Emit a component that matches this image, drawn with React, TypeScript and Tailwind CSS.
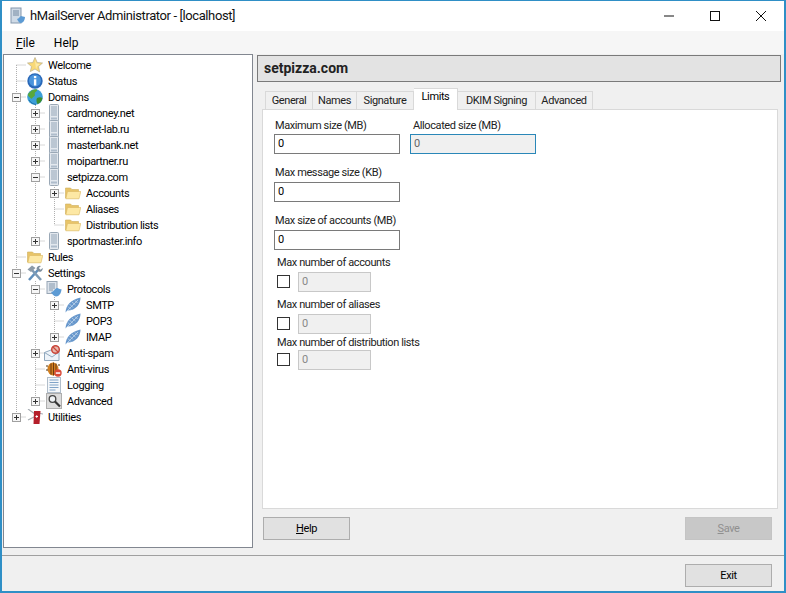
import React from 'react';

const FONT = "font-['Roboto','Liberation_Sans',sans-serif]";
const TEXT = 'text-[11px] tracking-[-0.4px]';
const LABEL = 'h-4 leading-[18px] whitespace-nowrap text-[#222]';

const Star = () => (
  <svg width="16" height="16" viewBox="0 0 16 16">
    <path d="M8 .5l2.200 5 5.300.5-4 3.600 1.200 5.400L8 12l-4.700 2.600L4.500 9.600l-4-3.600 5.300-.5z" fill="#f8d977" stroke="#b9ad8c" strokeWidth=".7" />
    <path d="M8 3l1.500 3.500L13 7l-3 2.500-1 3L8 3z" fill="#fbe9a8" />
  </svg>
);

const Info = () => (
  <svg width="16" height="16" viewBox="0 0 16 16">
    <circle cx="8" cy="8" r="7.700" fill="#2a68b8" />
    <circle cx="8" cy="7.500" r="6" fill="#4a94dc" />
    <rect x="6.900" y="3" width="2.400" height="2.200" fill="#fff" />
    <rect x="6.900" y="6.300" width="2.400" height="6.200" fill="#fff" />
  </svg>
);

const Globe = () => (
  <svg width="16" height="16" viewBox="0 0 16 16">
    <circle cx="8" cy="8" r="7.800" fill="#3c9fd8" />
    <path d="M3 3c2-2 5-3 7-2.500 1 1-1 2-2 3s1 3-1 4-2 3-3 2-2.500-2-3-3 .5-2.500 2-3.500z" fill="#5aa83c" />
    <path d="M10 9c2-1 4-1 5.500 0-.5 3-2.500 5.500-5 6-1-1.500-1.500-4-.5-6z" fill="#3f8f2e" />
    <path d="M2 11c2 3 4 4 7 4.500" stroke="#1f6fa8" fill="none" />
  </svg>
);

const Server = () => (
  <svg width="16" height="18" viewBox="0 0 16 18" className="-my-px">
    <rect x="3.500" y=".5" width="9" height="17" rx="1" fill="#e3e8ee" stroke="#9aa8b6" />
    <path d="M5 3h6M5 5h6M5 7h6M5 9h6M5 11h6" stroke="#93a5b7" />
    <rect x="5" y="13.500" width="6" height="2" fill="#aebccb" />
  </svg>
);

const Folder = () => (
  <svg width="16" height="16" viewBox="0 0 16 16">
    <path d="M.5 3h5l1.500 1.500h6.500V13H.5z" fill="#e8c468" stroke="#cfae5c" strokeWidth=".6" />
    <path d="M2.500 6.500H15.800L14 13.800H.8z" fill="#fde8a4" stroke="#dcb862" strokeWidth=".6" />
  </svg>
);

const Tools = () => (
  <svg width="16" height="16" viewBox="0 0 16 16">
    <path d="M2 15L11 5" stroke="#5f8fbc" strokeWidth="2.600" />
    <path d="M14 15L5 5" stroke="#7e9ab4" strokeWidth="2.600" />
    <path d="M.5 4.500L5 .5 8.500 3l-4.500 4z" fill="#8d9ba8" />
    <path d="M9.500 4a3.300 3.300 0 0 1 4.500-3l-2.200 2 1.700 1.700 2.200-1.800a3.300 3.300 0 0 1-4 3.800z" fill="#7f8f9e" />
  </svg>
);

const Protocols = () => (
  <svg width="16" height="16" viewBox="0 0 16 16">
    <rect x="1" y=".5" width="10" height="12" fill="#dde4ec" stroke="#98a6b5" />
    <path d="M3 3h6M3 5h6M3 7h6M3 9h4" stroke="#8296ab" />
    <path d="M5 11c3 0 4-4 6-4s3 2 4.500 1c0 4-2.500 7.500-5.500 7.500-2 0-4-2.500-5-4.500z" fill="#5d9bd4" />
  </svg>
);

const Feather = () => (
  <svg width="16" height="16" viewBox="0 0 16 16">
    <path d="M.5 15.500C1 8 6 2.500 15.500.5 15.500 7 11 13.500 2.500 13.500z" fill="#6797cc" />
    <path d="M1 15L13 3M4.500 7l3.500 3.500M7 5l3.500 3M3 9.500l3 3M10 3.500l2.500 2.500" stroke="#cfe0f0" strokeWidth=".7" />
  </svg>
);

const AntiSpam = () => (
  <svg width="18" height="16" viewBox="0 0 18 16" className="-ml-[2px]">
    <path d="M.5 7.500L7 5h8v10.500H.5z" fill="#edf3f9" stroke="#90a8be" />
    <path d="M.5 7.500L8 12 15 7" fill="none" stroke="#90a8be" />
    <circle cx="11.500" cy="4.500" r="3.800" fill="#e8b8ac" stroke="#c9473b" strokeWidth="1.500" />
    <path d="M9 2l5 5" stroke="#c9473b" strokeWidth="1.300" />
  </svg>
);

const AntiVirus = () => (
  <svg width="16" height="16" viewBox="0 0 16 16">
    <ellipse cx="7" cy="8" rx="5.500" ry="6.500" fill="#d27f1f" />
    <path d="M5 2.500v11M7.500 1.500v13M10 2.500v11" stroke="#6b3a10" />
    <path d="M0 5h2M0 9h2M12 4h2" stroke="#4d3010" />
    <circle cx="12" cy="12" r="3.700" fill="#d94a38" />
    <rect x="9.800" y="11.300" width="4.400" height="1.500" fill="#fff" />
  </svg>
);

const Logging = () => (
  <svg width="16" height="16" viewBox="0 0 16 16">
    <rect x="1.500" y=".5" width="13" height="15" fill="#f4f7fa" stroke="#b0bdca" />
    <path d="M3.500 3h9M3.500 5.500h9M3.500 8h9M3.500 10.500h9M3.500 13h6" stroke="#7fa3c8" />
  </svg>
);

const Advanced = () => (
  <svg width="16" height="16" viewBox="0 0 16 16">
    <rect x=".5" y=".5" width="15" height="15" fill="#dcdcdc" stroke="#aeaeae" />
    <circle cx="6.500" cy="6" r="3.300" fill="#eef2f5" stroke="#444" strokeWidth="1.300" />
    <path d="M9 8.500l5 5" stroke="#333" strokeWidth="2.200" />
  </svg>
);

const Knife = () => (
  <svg width="16" height="16" viewBox="0 0 16 16">
    <path d="M1 0l7 5M1 11l6-3M11 4l5 1" stroke="#a7aeb4" strokeWidth="1.200" fill="none" />
    <path d="M7 2h6.500L12.500 15H6.500z" fill="#b51f2b" />
    <path d="M8.500 7.500h2.500M9.700 6.300v2.500" stroke="#fff" />
  </svg>
);

type Node = {
  label: string;
  icon: React.ReactNode;
  guides: boolean[];
  exp?: '+' | '-';
  last?: boolean;
  first?: boolean;
};

const nodes: Node[] = [
  { label: 'Welcome', icon: <Star />, guides: [], first: true },
  { label: 'Status', icon: <Info />, guides: [] },
  { label: 'Domains', icon: <Globe />, guides: [], exp: '-' },
  { label: 'cardmoney.net', icon: <Server />, guides: [true], exp: '+' },
  { label: 'internet-lab.ru', icon: <Server />, guides: [true], exp: '+' },
  { label: 'masterbank.net', icon: <Server />, guides: [true], exp: '+' },
  { label: 'moipartner.ru', icon: <Server />, guides: [true], exp: '+' },
  { label: 'setpizza.com', icon: <Server />, guides: [true], exp: '-' },
  { label: 'Accounts', icon: <Folder />, guides: [true, true], exp: '+' },
  { label: 'Aliases', icon: <Folder />, guides: [true, true] },
  { label: 'Distribution lists', icon: <Folder />, guides: [true, true], last: true },
  { label: 'sportmaster.info', icon: <Server />, guides: [true], exp: '+', last: true },
  { label: 'Rules', icon: <Folder />, guides: [] },
  { label: 'Settings', icon: <Tools />, guides: [], exp: '-' },
  { label: 'Protocols', icon: <Protocols />, guides: [true], exp: '-' },
  { label: 'SMTP', icon: <Feather />, guides: [true, true], exp: '+' },
  { label: 'POP3', icon: <Feather />, guides: [true, true] },
  { label: 'IMAP', icon: <Feather />, guides: [true, true], exp: '+', last: true },
  { label: 'Anti-spam', icon: <AntiSpam />, guides: [true], exp: '+' },
  { label: 'Anti-virus', icon: <AntiVirus />, guides: [true] },
  { label: 'Logging', icon: <Logging />, guides: [true] },
  { label: 'Advanced', icon: <Advanced />, guides: [true], exp: '+', last: true },
  { label: 'Utilities', icon: <Knife />, guides: [], exp: '+', last: true },
];

const Connector = ({ exp, last, first }: { exp?: '+' | '-'; last?: boolean; first?: boolean }) => (
  <svg width="19" height="16" viewBox="0 0 19 16" className="shrink-0">
    <path
      d={first ? 'M9.500 8V16M9.500 8H19' : last ? 'M9.500 0V8H19' : 'M9.500 0V16M9.500 8H19'}
      stroke="#b0b0b0"
      strokeDasharray="1 1"
      fill="none"
    />
    {exp && (
      <>
        <rect x="5.500" y="4.500" width="8" height="8" fill="#f6f6f6" stroke="#a0a0a0" />
        <path d={exp === '+' ? 'M7 8.500h5M9.500 6v5' : 'M7 8.500h5'} stroke="#333" />
      </>
    )}
  </svg>
);

const Guide = ({ on }: { on: boolean }) => (
  <svg width="19" height="16" viewBox="0 0 19 16" className="shrink-0">
    {on && <path d="M9.500 0V16" stroke="#b0b0b0" strokeDasharray="1 1" />}
  </svg>
);

const TreeRow = ({ node }: { node: Node }) => (
  <div className="flex h-4 items-center">
    {node.guides.map((g, i) => (
      <Guide key={i} on={g} />
    ))}
    <Connector exp={node.exp} last={node.last} first={node.first} />
    <div className="ml-px w-4 shrink-0">{node.icon}</div>
    <span className={`ml-[5px] h-4 whitespace-nowrap leading-[18px] text-black ${TEXT}`}>{node.label}</span>
  </div>
);

const Field = ({ label, gap, className }: { label: string; gap: string; className?: string }) => (
  <div className={className}>
    <div className={`pl-px ${LABEL} ${TEXT}`}>{label}</div>
    <div className={`flex h-[20px] w-[126px] items-center border border-[#7a7a7a] bg-white pl-[3px] pt-px text-black ${TEXT} ${gap}`}>0</div>
  </div>
);

const LimitField = ({ label, gap, className }: { label: string; gap: string; className?: string }) => (
  <div className={className}>
    <div className={`pl-[3px] ${LABEL} ${TEXT}`}>{label}</div>
    <div className={`flex items-center pl-[3px] ${gap}`}>
      <div className="-mt-[2px] h-[13px] w-[13px] border border-[#333] bg-white" />
      <div className={`ml-[8px] flex h-[20px] w-[73px] items-center border border-[#c8c8c8] bg-[#f0f0f0] pl-[3px] pt-px text-[#888] ${TEXT}`}>0</div>
    </div>
  </div>
);

const Button = ({ hot, rest, disabled }: { hot: string; rest: string; disabled?: boolean }) => (
  <div className={`flex h-[23px] w-[87px] items-center justify-center border pt-[2px] ${TEXT} ${disabled ? 'border-[#c4c4c4] bg-[#c8c8c8] text-[#8f8f8f]' : 'border-[#adadad] bg-[#e1e1e1] text-black'}`}>
    <span className="underline">{hot}</span>
    {rest}
  </div>
);

const tabs = [
  { label: 'General', width: 'w-[48px] border-l' },
  { label: 'Names', width: 'w-[44px]' },
  { label: 'Signature', width: 'w-[57px]' },
  { label: 'Limits', width: 'w-[44px]' },
  { label: 'DKIM Signing', width: 'w-[78px]' },
  { label: 'Advanced', width: 'w-[57px]' },
];

export default function App() {
  return (
    <div className={`flex h-[593px] w-[786px] flex-col overflow-hidden border-x-2 border-b-2 border-t border-[#2f8fc6] bg-[#f0f0f0] ${FONT}`}>
      <div className="flex h-[30px] shrink-0 items-center bg-white">
        <svg width="16" height="18" viewBox="0 0 16 18" className="ml-[8px]">
          <rect x="1" y="1" width="10" height="15" fill="#cfdae6" stroke="#8598ad" />
          <path d="M3 4h6M3 6h6M3 8h6" stroke="#7388a0" />
          <path d="M7 12c2 0 3-3 4-3s3 1 4 1c0 3-2 6-4 6s-3-2-4-4z" fill="#5d9bd4" />
        </svg>
        <span className="ml-[4px] text-[13px] tracking-[-0.4px] text-[#111]">hMailServer Administrator - [localhost]</span>
        <div className="ml-auto flex items-center">
          <svg width="46" height="30" viewBox="0 0 46 30"><path d="M18 15h10" stroke="#111" /></svg>
          <svg width="46" height="30" viewBox="0 0 46 30"><rect x="18.500" y="10.500" width="9" height="9" fill="none" stroke="#111" /></svg>
          <svg width="46" height="30" viewBox="0 0 46 30"><path d="M18 10l10 10M28 10L18 20" stroke="#111" /></svg>
        </div>
      </div>

      <div className="flex h-[23px] shrink-0 items-center gap-[19px] bg-[#f6f6f6] pl-[14px] text-[12px] text-black">
        <span><span className="underline">F</span>ile</span>
        <span>Help</span>
      </div>

      <div className="flex min-h-0 flex-1">
        <div className="ml-px h-[494px] w-[250px] shrink-0 border border-[#828790] bg-white pl-[3px] pt-[2px]">
          {nodes.map(n => (
            <TreeRow key={n.label} node={n} />
          ))}
        </div>

        <div className="ml-[4px] flex w-[524px] flex-col">
          <div className="mt-px flex h-[27px] items-center border border-[#7a7a7a] bg-[#e3e3e3] pl-[6px] text-[14px] font-bold text-[#222]">setpizza.com</div>

          <div className="ml-[8px] mt-[6px] flex h-[21px] items-end">
            {tabs.map(t =>
              t.label === 'Limits' ? (
                <div key={t.label} className={`z-10 -mb-px flex h-[22px] items-center justify-center border-t border-r border-[#d9d9d9] bg-white pb-[5px] text-black ${t.width} ${TEXT}`}>{t.label}</div>
              ) : (
                <div key={t.label} className={`flex h-[18px] items-center justify-center border-t border-r border-[#d9d9d9] bg-[#f0f0f0] pt-[2px] text-[#222] ${t.width} ${TEXT}`}>{t.label}</div>
              ),
            )}
          </div>

          <div className="ml-[5px] h-[400px] w-[516px] border border-[#d9d9d9] bg-white pl-[11px] pt-[7px]">
            <div className="flex gap-[10px]">
              <Field label="Maximum size (MB)" gap="mt-px" />
              <div>
                <div className={`pl-[3px] ${LABEL} ${TEXT}`}>Allocated size (MB)</div>
                <div className={`mt-px flex h-[20px] w-[126px] items-center border border-[#2a87b8] bg-[#f0f0f0] pl-[3px] pt-px text-[#666] ${TEXT}`}>0</div>
              </div>
            </div>
            <Field label="Max message size (KB)" gap="mt-[2px]" className="mt-[10px]" />
            <Field label="Max size of accounts (MB)" gap="mt-[2px]" className="mt-[10px]" />
            <LimitField label="Max number of accounts" gap="mt-[2px]" className="mt-[4px]" />
            <LimitField label="Max number of aliases" gap="mt-[2px]" className="mt-[4px]" />
            <LimitField label="Max number of distribution lists" gap="mt-0" />
          </div>

          <div className="ml-[6px] mt-[8px] flex w-[509px] justify-between">
            <Button hot="H" rest="elp" />
            <Button hot="S" rest="ave" disabled />
          </div>
        </div>
      </div>

      <div className="flex h-[36px] shrink-0 items-start justify-end border-t border-[#a0a0a0] pr-[12px] pt-[8px]">
        <div className={`flex h-[23px] w-[87px] items-center justify-center border border-[#adadad] bg-[#e1e1e1] pt-[2px] text-black ${TEXT}`}>Exit</div>
      </div>
    </div>
  );
}
